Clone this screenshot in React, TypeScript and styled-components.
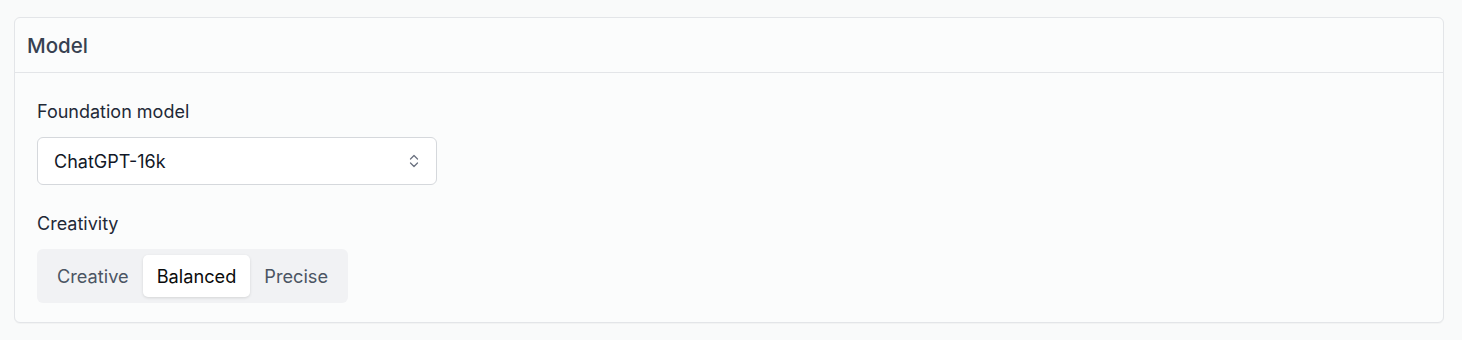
import React, { useState } from 'react'
import styled, { createGlobalStyle } from 'styled-components'

const GlobalStyle = createGlobalStyle`
  html, body {
    margin: 0;
    background: #f9fafa;
    font-family: Inter, "Noto Sans", "Liberation Sans", sans-serif;
    -webkit-font-smoothing: antialiased;
  }
`

const Page = styled.div`
  padding: 17px 18px 16px 14px;
`

const Card = styled.section`
  border: 1px solid #e3e5e8;
  border-radius: 6px;
  background: #fbfcfc;
  box-shadow: 0 1px 1px rgba(0, 0, 0, 0.03);
`

const CardHeader = styled.header`
  height: 54px;
  display: flex;
  align-items: center;
  padding: 0 12px;
  border-bottom: 1px solid #e3e5e8;
`

const CardTitle = styled.h2`
  margin: 0;
  font-size: 20.5px;
  font-weight: 500;
  color: #374151;
`

const CardBody = styled.div`
  display: flex;
  flex-direction: column;
  gap: 25px;
  padding: 25px 22px 19px;
`

const Field = styled.div`
  display: flex;
  flex-direction: column;
  gap: 11px;
`

const Label = styled.label`
  font-size: 18px;
  line-height: 28px;
  color: #1f2937;
`

const SelectBox = styled.button`
  width: 400px;
  height: 48px;
  display: flex;
  align-items: center;
  justify-content: space-between;
  padding: 0 16px 0 16px;
  border: 1px solid #d5d8dc;
  border-radius: 6px;
  background: #fff;
  font: inherit;
  font-size: 18px;
  color: #111827;
  cursor: pointer;
`

const Segmented = styled.div`
  display: inline-flex;
  align-self: flex-start;
  padding: 6px;
  border-radius: 6px;
  background: #f1f2f4;
`

const Segment = styled.button<{ $active?: boolean }>`
  height: 42px;
  padding: 0 14px;
  border: 0;
  border-radius: 5px;
  font: inherit;
  font-size: 18.2px;
  color: ${p => (p.$active ? '#0b0b0b' : '#4b5563')};
  background: ${p => (p.$active ? '#fff' : 'transparent')};
  box-shadow: ${p => (p.$active ? '0 1px 3px rgba(0,0,0,0.12)' : 'none')};
  cursor: pointer;
`

function UpDown() {
  return (
    <svg width="12" height="16" viewBox="0 0 12 16" fill="none" stroke="#6b7280" strokeWidth="1.3" strokeLinecap="round" strokeLinejoin="round">
      <path d="M2.5 6 6 2.5 9.5 6" />
      <path d="M2.5 10 6 13.5 9.5 10" />
    </svg>
  )
}

export default function App() {
  const [mode, setMode] = useState('Balanced')
  return (
    <Page>
      <GlobalStyle />
      <Card>
        <CardHeader>
          <CardTitle>Model</CardTitle>
        </CardHeader>
        <CardBody>
          <Field>
            <Label>Foundation model</Label>
            <SelectBox>
              <span>ChatGPT-16k</span>
              <UpDown />
            </SelectBox>
          </Field>
          <Field>
            <Label>Creativity</Label>
            <Segmented>
              {['Creative', 'Balanced', 'Precise'].map(m => (
                <Segment key={m} $active={mode === m} onClick={() => setMode(m)}>
                  {m}
                </Segment>
              ))}
            </Segmented>
          </Field>
        </CardBody>
      </Card>
    </Page>
  )
}
